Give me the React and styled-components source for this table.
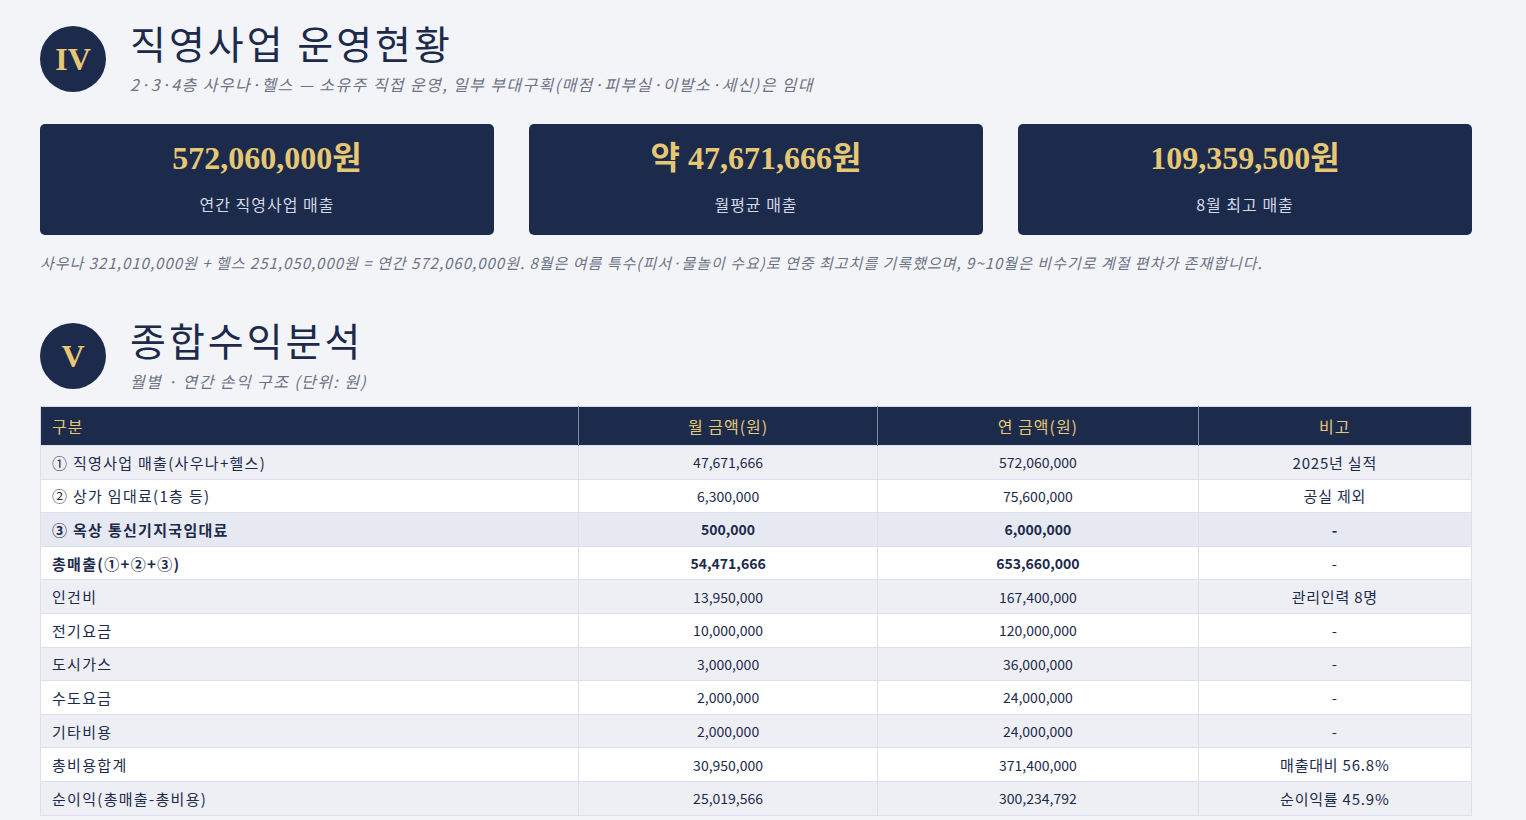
import React from 'react';
import styled, { createGlobalStyle, css } from 'styled-components';

const NAVY = '#1c2a4c';
const GOLD = '#e6c874';

const GlobalStyle = createGlobalStyle`
  body {
    margin: 0;
    background: #f3f4f8;
    font-family: "Noto Sans CJK KR", "Noto Sans", sans-serif;
    color: ${NAVY};
  }
`;

const cards = [
  { value: '572,060,000원', label: '연간 직영사업 매출' },
  { value: '약 47,671,666원', label: '월평균 매출' },
  { value: '109,359,500원', label: '8월 최고 매출' },
];

const rows = [
  { name: '① 직영사업 매출(사우나+헬스)', month: '47,671,666', year: '572,060,000', note: '2025년 실적' },
  { name: '② 상가 임대료(1층 등)', month: '6,300,000', year: '75,600,000', note: '공실 제외' },
  { name: '③ 옥상 통신기지국임대료', month: '500,000', year: '6,000,000', note: '-', highlight: true },
  { name: '총매출(①+②+③)', month: '54,471,666', year: '653,660,000', note: '-', bold: true },
  { name: '인건비', month: '13,950,000', year: '167,400,000', note: '관리인력 8명' },
  { name: '전기요금', month: '10,000,000', year: '120,000,000', note: '-' },
  { name: '도시가스', month: '3,000,000', year: '36,000,000', note: '-' },
  { name: '수도요금', month: '2,000,000', year: '24,000,000', note: '-' },
  { name: '기타비용', month: '2,000,000', year: '24,000,000', note: '-' },
  { name: '총비용합계', month: '30,950,000', year: '371,400,000', note: '매출대비 56.8%' },
  { name: '순이익(총매출-총비용)', month: '25,019,566', year: '300,234,792', note: '순이익률 45.9%' },
];

function SectionHead({ num, title, sub }) {
  return (
    <Head>
      <Badge>{num}</Badge>
      <div>
        <Title>{title}</Title>
        <Sub>{sub}</Sub>
      </div>
    </Head>
  );
}

export default function App() {
  return (
    <Page>
      <GlobalStyle />
      <SectionHead
        num="IV"
        title="직영사업 운영현황"
        sub="2·3·4층 사우나·헬스 — 소유주 직접 운영, 일부 부대구획(매점·피부실·이발소·세신)은 임대"
      />
      <Cards>
        {cards.map(c => (
          <Card key={c.label}>
            <Value>{c.value}</Value>
            <Label>{c.label}</Label>
          </Card>
        ))}
      </Cards>
      <Note>
        사우나 321,010,000원 + 헬스 251,050,000원 = 연간 572,060,000원. 8월은 여름 특수(피서·물놀이 수요)로 연중 최고치를 기록했으며, 9~10월은 비수기로 계절 편차가 존재합니다.
      </Note>

      <SectionV>
        <SectionHead num="V" title="종합수익분석" sub="월별 · 연간 손익 구조 (단위: 원)" />
      </SectionV>
      <Table>
        <colgroup>
          <col style={{ width: '37.6%' }} />
          <col style={{ width: '20.9%' }} />
          <col style={{ width: '22.4%' }} />
          <col style={{ width: '19.1%' }} />
        </colgroup>
        <thead>
          <tr>
            <Th $left>구분</Th>
            <Th>월 금액(원)</Th>
            <Th>연 금액(원)</Th>
            <Th>비고</Th>
          </tr>
        </thead>
        <tbody>
          {rows.map((r, i) => (
            <Row key={r.name} $odd={i % 2 === 0} $highlight={r.highlight}>
              <Td $kind="label" $bold={r.highlight || r.bold}>{r.name}</Td>
              <Td $bold={r.highlight || r.bold}>{r.month}</Td>
              <Td $bold={r.highlight || r.bold}>{r.year}</Td>
              <Td $kind="note" $bold={r.highlight}>{r.note}</Td>
            </Row>
          ))}
        </tbody>
      </Table>
    </Page>
  );
}

const Page = styled.div`
  padding: 18px 54px 0 40px;
`;

const Head = styled.div`
  display: flex;
  align-items: flex-start;
  gap: 24px;
`;

const Badge = styled.div`
  width: 66px;
  height: 66px;
  margin-top: 8px;
  border-radius: 50%;
  background: ${NAVY};
  color: ${GOLD};
  display: flex;
  align-items: center;
  justify-content: center;
  font-family: "Liberation Serif", serif;
  font-weight: 700;
  font-size: 32px;
  flex-shrink: 0;
`;

const Title = styled.h1`
  margin: 0;
  font-family: "Noto Sans CJK KR", serif;
  font-weight: 400;
  font-size: 39px;
  line-height: 48px;
  letter-spacing: 3px;
  color: ${NAVY};
`;

const Sub = styled.div`
  margin-top: 8px;
  font-size: 16px;
  font-style: italic;
  letter-spacing: 1.4px;
  color: #6b7285;
  line-height: 20px;
`;

const Cards = styled.div`
  display: grid;
  grid-template-columns: repeat(3, 1fr);
  gap: 35px;
  margin-top: 30px;
`;

const Card = styled.div`
  background: ${NAVY};
  border-radius: 5px;
  height: 111px;
  display: flex;
  flex-direction: column;
  align-items: center;
  padding-top: 13px;
  box-sizing: border-box;
`;

const Value = styled.div`
  font-family: "Liberation Serif", "Noto Sans CJK KR", serif;
  font-weight: 700;
  font-size: 32px;
  line-height: 42px;
  color: ${GOLD};
`;

const Label = styled.div`
  margin-top: 13px;
  font-size: 16px;
  letter-spacing: 1px;
  color: #d3d8e6;
`;

const Note = styled.p`
  margin: 17px 0 0;
  font-size: 15px;
  font-style: italic;
  letter-spacing: 1px;
  color: #6b7285;
`;

const SectionV = styled.div`
  margin-top: 42px;
`;

const Table = styled.table`
  margin-top: 15px;
  width: 100%;
  border-collapse: collapse;
  table-layout: fixed;
  border: 1px solid #d5d9e4;
  font-size: 14px;
`;

const Th = styled.th`
  background: ${NAVY};
  color: ${GOLD};
  font-weight: 400;
  font-size: 16px;
  letter-spacing: 1px;
  height: 38px;
  padding: 0 11px;
  text-align: ${p => (p.$left ? 'left' : 'center')};
  border-left: 1px solid #7d879e;
  &:first-child {
    border-left: none;
  }
`;

const Row = styled.tr`
  background: ${p => (p.$highlight ? '#e6e9f2' : p.$odd ? '#eeeff4' : '#ffffff')};
`;

const Td = styled.td`
  height: 32.6px;
  padding: 0 11px;
  text-align: ${p => (p.$kind === 'label' ? 'left' : 'center')};
  border: 1px solid #dde0ea;
  color: ${NAVY};
  ${p =>
    p.$kind === 'label' &&
    css`
      font-size: 15px;
      letter-spacing: 1.3px;
    `}
  ${p =>
    p.$kind === 'note' &&
    css`
      font-size: 15px;
      letter-spacing: 0.8px;
    `}
  ${p =>
    p.$bold &&
    css`
      font-weight: 700;
    `}
`;
